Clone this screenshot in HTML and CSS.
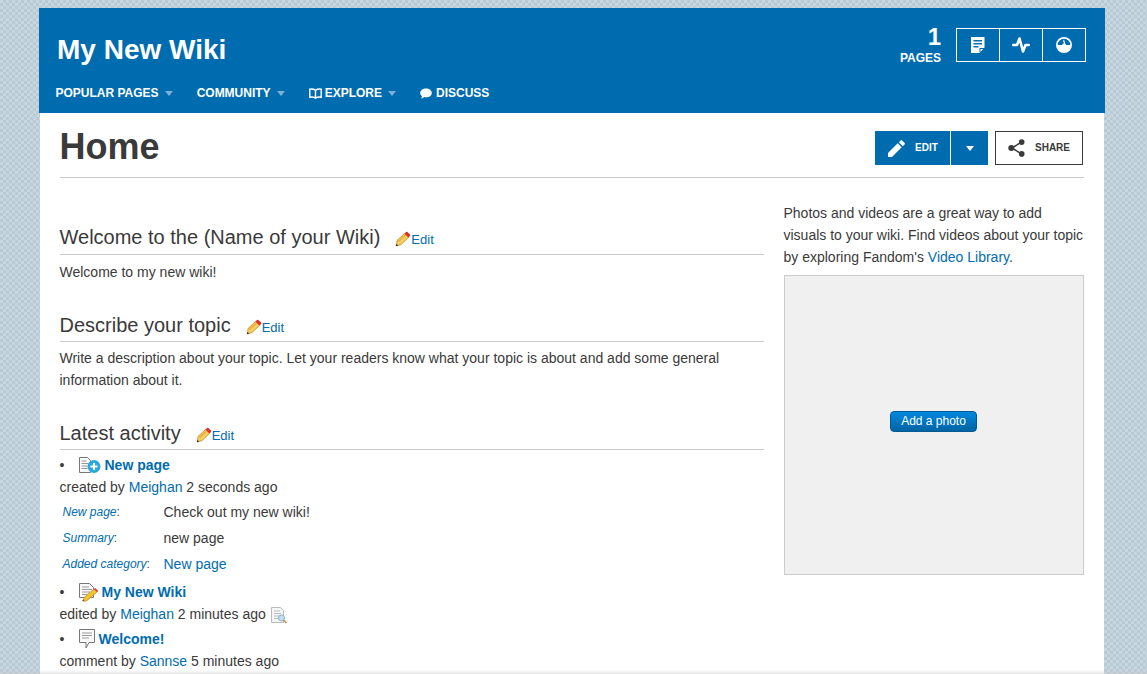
FILE: index.html
```html
<!DOCTYPE html>
<html lang="en">
<head>
<meta charset="utf-8">
<title>My New Wiki</title>
<link rel="stylesheet" href="styles.css">
</head>
<body>
<div class="page">
  <header class="wiki-header">
    <div class="header-top">
      <h2 class="wiki-name">My New Wiki</h2>
      <div class="tally"><b>1</b><span>PAGES</span></div>
      <div class="tools">
        <a class="tool"><svg width="14" height="16" viewBox="0 0 14 16"><path fill="#fff" fill-rule="evenodd" d="M0 0h13.500v10.500L8.500 16H0zM2.500 3v1.500h8.500V3zM2.500 6v1.500h8.500V6zM2.500 9v1.500h5V9z"/><path fill="#006cb0" d="M8.500 11h5v1h-4v3.500h-1z"/></svg></a>
        <a class="tool"><svg width="18" height="16" viewBox="0 0 18 16"><path fill="none" stroke="#fff" stroke-width="2.600" stroke-linecap="round" stroke-linejoin="round" d="M1.300 8H5L7.500 1.500 11 14.500 13.500 8h3.200"/></svg></a>
        <a class="tool"><svg width="16" height="16" viewBox="0 0 16 16"><path fill="#fff" fill-rule="evenodd" d="M8 0a8 8 0 1 1 0 16A8 8 0 0 1 8 0zM8 1.700A6.300 6.300 0 0 0 1.700 8h4.400a2 2 0 0 1 1.800-1.500L7 3.400l1.200-.4 1 3.500A2 2 0 0 1 9.900 8h4.400A6.300 6.300 0 0 0 8 1.700z"/></svg></a>
      </div>
    </div>
    <nav class="wiki-nav">
      <a class="nav-item">POPULAR PAGES<i class="nav-caret"></i></a>
      <a class="nav-item">COMMUNITY<i class="nav-caret"></i></a>
      <a class="nav-item"><svg class="nav-icon icon-book" width="13" height="11" viewBox="0 0 13 11"><path fill="none" stroke="#fff" stroke-width="1.400" d="M6.500 2.300C5 1.100 3 .8.800 1.100v8.100C3 8.900 5 9 6.500 10.200 8 9 10 8.900 12.200 9.200V1.100C10 .8 8 1.100 6.500 2.300zM6.500 2.300v7.900"/></svg>EXPLORE<i class="nav-caret"></i></a>
      <a class="nav-item"><svg class="nav-icon" width="12" height="11" viewBox="0 0 12 11"><path fill="#fff" d="M6 .5c3.200 0 5.800 1.900 5.800 4.400S9.200 9.300 6 9.300c-.6 0-1.100 0-1.700-.2C3.400 10 2.200 10.500 1 10.500c.6-.6 1-1.500 1-2.400C.8 7.300.2 6.200.2 4.900.2 2.400 2.800.5 6 .5z"/></svg>DISCUSS</a>
    </nav>
  </header>
  <main class="content">
    <div class="page-head">
      <h1 class="page-title">Home</h1>
      <div class="actions">
        <div class="edit-group">
          <a class="edit-btn"><svg width="17" height="17" viewBox="0 0 18 18"><path fill="#fff" d="M0 18v-4.200L10.300 3.500l4.200 4.200L4.200 18zM11.500 2.300 13.300.5a1.200 1.200 0 0 1 1.700 0l2.500 2.500a1.200 1.200 0 0 1 0 1.700l-1.800 1.800z"/></svg>EDIT</a>
          <a class="edit-drop"><i class="drop-caret"></i></a>
        </div>
        <a class="share-btn"><svg width="17" height="18" viewBox="0 0 18 19"><path fill="none" stroke="#3a3a3a" stroke-width="1.600" d="M14 3.500 4 9.500l10 6"/><circle cx="14.500" cy="3.200" r="3" fill="#3a3a3a"/><circle cx="3.500" cy="9.500" r="3.200" fill="#3a3a3a"/><circle cx="14.500" cy="15.800" r="3" fill="#3a3a3a"/></svg>SHARE</a>
      </div>
    </div>
    <div class="columns">
      <article class="article">
        <h2 class="section"><span class="sec-text">Welcome to the (Name of your Wiki)</span><a class="sec-edit"><svg class="pencil" width="16" height="16" viewBox="0 0 16 16"><use href="#pencil"/></svg>Edit</a></h2>
        <p class="para">Welcome to my new wiki!</p>
        <h2 class="section"><span class="sec-text">Describe your topic</span><a class="sec-edit"><svg class="pencil" width="16" height="16" viewBox="0 0 16 16"><use href="#pencil"/></svg>Edit</a></h2>
        <p class="para">Write a description about your topic. Let your readers know what your topic is about and add some general information about it.</p>
        <h2 class="section"><span class="sec-text">Latest activity</span><a class="sec-edit"><svg class="pencil" width="16" height="16" viewBox="0 0 16 16"><use href="#pencil"/></svg>Edit</a></h2>
        <ul class="activity">
          <li>
            <div class="act-title"><svg class="act-icon" width="22" height="16" viewBox="0 0 22 16"><path fill="#fafafa" stroke="#777" d="M.5.500h8l3 3v12H.500z"/><path stroke="#999" d="M2.500 4h5M2.500 6.500h7M2.500 9h6M2.500 11.500h6"/><circle cx="15" cy="9.500" r="6.500" fill="#29a9e0"/><path stroke="#fff" stroke-width="2" d="M11.500 9.500h7M15 6v7"/></svg><a class="strong">New page</a></div>
            <div>created by <a>Meighan</a> 2 seconds ago</div>
            <table class="details">
              <tr><th><i>New page</i>:</th><td>Check out my new wiki!</td></tr>
              <tr><th><i>Summary</i>:</th><td>new page</td></tr>
              <tr><th><i>Added category</i>:</th><td><a>New page</a></td></tr>
            </table>
          </li>
          <li>
            <div class="act-title"><svg class="act-icon" width="19" height="19" viewBox="0 0 19 19"><path fill="#fafafa" stroke="#777" d="M.5.500h10l4 4v10H.500z"/><path stroke="#999" d="M3 4h7M3 6.500h10M3 9h8M3 11.500h5"/><path fill="#f4c430" stroke="#b8860b" stroke-width=".7" d="M5 14.500 15 6l3 3-10 8.500-3.500 1z"/><path fill="#d33" d="M15 6l1.200-1 3 3-1.200 1z"/><path fill="#222" d="M3 18l1.500-1.500.8.800-1.800.7z"/></svg><a class="strong">My New Wiki</a></div>
            <div class="act-edited">edited by <a>Meighan</a> 2 minutes ago <svg class="diff" width="16" height="17" viewBox="0 0 16 17"><path fill="#f4f6f8" stroke="#bbb" d="M.5.500h9l3 3v12H.500z"/><path stroke="#bbb" d="M3 4h6M3 6.500h7M3 9h7M3 11.500h7"/><circle cx="10.500" cy="11" r="3" fill="#bfe0f2" stroke="#8fb5cc"/><path stroke="#c98a3d" stroke-width="1.500" d="M12.500 13l3 3"/></svg></div>
          </li>
          <li>
            <div class="act-title"><svg class="act-icon" width="16" height="20" viewBox="0 0 16 20"><path fill="#fafafa" stroke="#777" d="M.5.500h15v13h-5.500l-3 5.500v-5.500H.500z"/><path stroke="#999" d="M3 4h10M3 6.500h10M3 9h7"/></svg><a class="strong">Welcome!</a></div>
            <div>comment by <a>Sannse</a> 5 minutes ago</div>
          </li>
        </ul>
      </article>
      <aside class="rail">
        <p class="rail-text">Photos and videos are a great way to add visuals to your wiki. Find videos about your topic by exploring Fandom's <a>Video Library</a>.</p>
        <div class="photo-box"><a class="photo-btn">Add a photo</a></div>
      </aside>
    </div>
  </main>
</div>
<div class="bottom-fade"></div>
<svg class="defs" width="0" height="0"><defs><g id="pencil"><path fill="#f5cf62" stroke="#c08a1e" stroke-width=".8" d="M2 9.500 9.500 2.500l4 4-7.500 7-4.500 1.500z"/><path fill="#f0a83a" d="M3 10 10 3.500l1 1L4 11z"/><path fill="#d8322a" d="M9.500 2.500 11 1a1 1 0 0 1 1.400 0l2.600 2.600a1 1 0 0 1 0 1.400L13.500 6.500z"/><path fill="#222" d="M.8 15.300 1.500 13l1.600 1.600z"/></g></defs></svg>
</body>
</html>
```
FILE: styles.css
```css
html, body { margin: 0; height: 674px; overflow: hidden; }
body {
  font: 14px/22px "Liberation Sans", Arial, sans-serif;
  color: #3a3a3a;
  background-color: #c0d0db;
  background-image: conic-gradient(#b8cad7 25%, #c8d6e0 0 50%, #b8cad7 0 75%, #c8d6e0 0);
  background-size: 6px 6px;
  position: relative;
}
a { color: #006cb0; }
.page { width: 1064px; margin: 8px 0 0 40px; background: #fff; height: 666px; }
.wiki-header { background: #006cb0; height: 105px; width: 1066px; color: #fff; margin-left: -1px; padding: 0 19px 0 16.5px; box-sizing: border-box; }
.header-top { display: flex; align-items: flex-start; height: 71px; }
.wiki-name { margin: 24px 0 0 1.5px; font-size: 28px; line-height: 36px; font-weight: bold; flex: 1; }
.tally { display: flex; flex-direction: column; align-items: flex-end; margin: 17px 15px 0 0; }
.tally b { font-size: 24px; line-height: 24px; }
.tally span { font-size: 12px; line-height: 14px; font-weight: bold; margin-top: 2px; }
.tools { display: flex; margin-top: 20px; border: 1px solid #fff; height: 32px; }
.tool { width: 42px; display: flex; align-items: center; justify-content: center; border-left: 1px solid #fff; }
.tool:first-child { border-left: 0; }
.wiki-nav { display: flex; gap: 24px; height: 34px; align-items: flex-start; }
.nav-item { display: flex; align-items: center; color: #fff; font-size: 12px; font-weight: bold; line-height: 15px; margin-top: 7px; }
.nav-icon { margin-right: 4px; }
.icon-book { margin-right: 3px; }
.nav-caret { width: 0; height: 0; margin-left: 6px; border: 4px solid transparent; border-bottom: 0; border-top: 5px solid #7fb0d4; }
.content { padding: 0 20.5px 0 19.5px; }
.page-head { display: flex; justify-content: space-between; align-items: flex-start; height: 64px; border-bottom: 1px solid #ccc; }
.page-title { margin: 12px 0 0; font-size: 36px; line-height: 44px; font-weight: bold; }
.actions { display: flex; gap: 7px; margin: 18px .5px 0 0; }
.edit-group { display: flex; background: #006cb0; height: 34px; }
.edit-btn { display: flex; align-items: center; gap: 10px; width: 76px; padding-left: 13px; box-sizing: border-box; color: #fff; font-size: 10px; font-weight: bold; border-right: 1px solid #fff; }
.edit-drop { width: 37px; display: flex; align-items: center; justify-content: center; }
.drop-caret { border: 4.500px solid transparent; border-bottom: 0; border-top: 5px solid #fff; }
.share-btn { display: flex; align-items: center; gap: 10px; box-sizing: border-box; width: 88px; height: 34px; padding-left: 12px; border: 1px solid #3a3a3a; color: #3a3a3a; font-size: 10px; font-weight: bold; }
.columns { display: flex; justify-content: space-between; }
.article { width: 704px; padding-top: 46px; }
.section { margin: 0; font-size: 20px; font-weight: normal; line-height: 26px; border-bottom: 1px solid #ccc; padding-bottom: 3px; }
.section:first-child { padding-bottom: 4px; }
.sec-text { margin-right: 15px; }
.sec-edit { font-size: 13px; line-height: 1; }
.pencil { vertical-align: -3px; }
.para { margin: 5px 0 29px; }
.section:first-child + .para { margin-top: 6px; }
.activity { margin: 4px 0 0; padding: 0; list-style: none; }
.activity li { position: relative; }
.activity li::before { content: "•"; position: absolute; left: 0; top: 0; }
.act-title { padding-left: 19px; display: flex; align-items: center; height: 22px; }
.act-icon { margin-right: 4px; flex: none; }
.strong { font-weight: bold; }
.act-edited { padding-bottom: 3px; }
.diff { vertical-align: -5px; margin-left: 1px; }
.details { border-collapse: separate; border-spacing: 0; margin: 1px 0 4px; }
.details th { font-weight: normal; font-size: 12px; text-align: left; padding: 2px 3px; width: 95px; }
.details th i { color: #006cb0; }
.details td { padding: 2px 3px; }
.rail { width: 300px; padding-top: 24px; }
.rail-text { margin: 0 0 7px; }
.photo-box { width: 300px; height: 300px; box-sizing: border-box; padding-bottom: 8px; border: 1px solid #ccc; background: #f0f0f0; display: flex; align-items: center; justify-content: center; }
.photo-btn { display: block; width: 87px; height: 21px; box-sizing: border-box; border: 1px solid #005a94; border-radius: 4px; background: linear-gradient(#0088de, #0064a4); color: #fff; font-size: 12px; line-height: 19px; text-align: center; }
.bottom-fade { position: absolute; left: 0; right: 0; bottom: 0; height: 4px; background: linear-gradient(rgba(200,200,200,0), rgba(200,200,200,.5)); }
.defs { position: absolute; }
```
